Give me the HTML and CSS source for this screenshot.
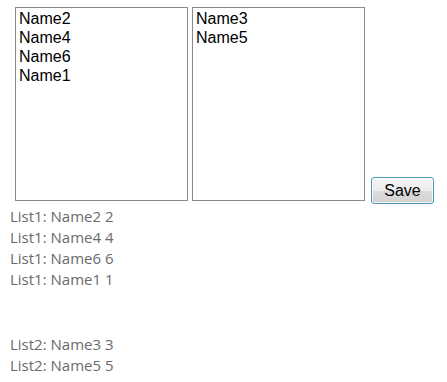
FILE: index.html
```html
<!DOCTYPE html>
<html lang="en">
<head>
    <meta charset="UTF-8">
    <meta name="viewport" content="width=device-width, initial-scale=1.0">
    <title>Lists</title>
    <link rel="stylesheet" href="styles.css">
</head>
<body>
    <div class="pickers">
        <div class="listbox">
            <div class="item">Name2</div>
            <div class="item">Name4</div>
            <div class="item">Name6</div>
            <div class="item">Name1</div>
        </div>
        <div class="listbox">
            <div class="item">Name3</div>
            <div class="item">Name5</div>
        </div>
        <button class="save-btn">Save</button>
    </div>

    <div class="output">
        <div class="line">List1: Name2 2</div>
        <div class="line">List1: Name4 4</div>
        <div class="line">List1: Name6 6</div>
        <div class="line">List1: Name1 1</div>
        <div class="spacer"></div>
        <div class="line">List2: Name3 3</div>
        <div class="line">List2: Name5 5</div>
    </div>
</body>
</html>
```

FILE: styles.css
```css
* {
    margin: 0;
    padding: 0;
    box-sizing: border-box;
}
body {
    background: #fff;
    font-family: "Liberation Sans", Arial, sans-serif;
}
.pickers {
    display: flex;
    align-items: flex-end;
    gap: 4px;
    padding: 7px 0 0 15px;
}
.listbox {
    width: 173px;
    height: 194px;
    border: 1px solid #8a8a8a;
    padding: 1px 3px;
    font-size: 16px;
    line-height: 19px;
    color: #000;
}
.save-btn {
    width: 63px;
    height: 27px;
    margin: 0 0 -3px 2px;
    font-family: "Liberation Sans", Arial, sans-serif;
    font-size: 16px;
    color: #000;
    border: 1px solid #4a98bd;
    border-radius: 3px;
    background: linear-gradient(to bottom, #f5f5f5 0%, #ebebeb 50%, #dcdcdc 51%, #d2d2d2 100%);
    box-shadow: inset 0 0 0 1px rgba(255,255,255,0.8);
}
.output {
    padding: 5px 0 0 10px;
    font-family: "Open Sans", "Noto Sans", sans-serif;
    font-size: 15px;
    line-height: 21px;
    color: #6a6a6a;
}
.spacer {
    height: 44px;
}
```
